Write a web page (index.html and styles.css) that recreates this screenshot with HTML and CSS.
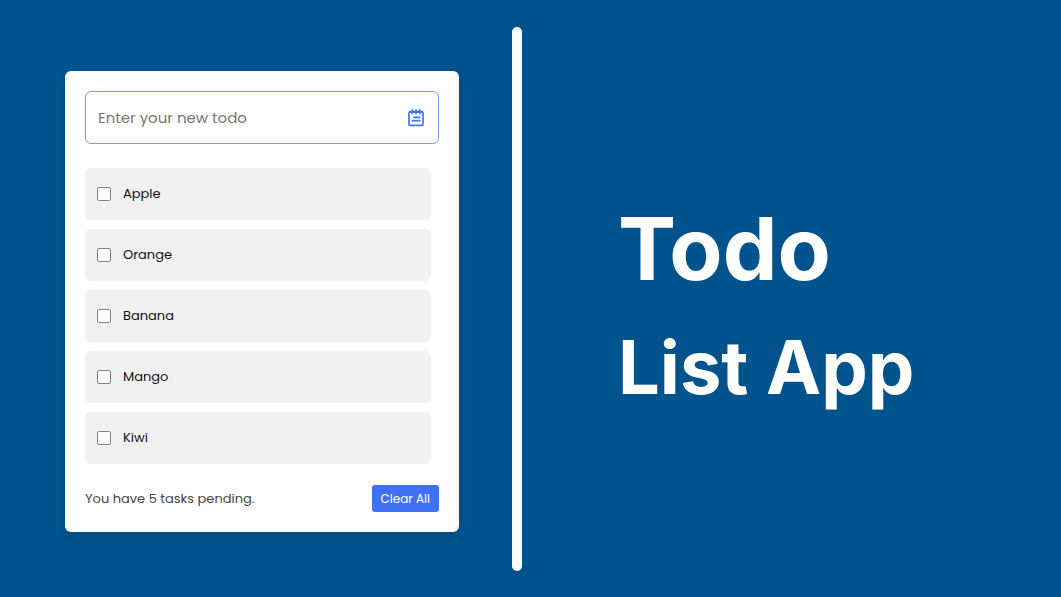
FILE: index.html
```html
<!DOCTYPE html>
<html lang="en">
<head>
  <meta charset="utf-8">
  <meta name="viewport" content="width=device-width, initial-scale=1">
  <title>Todo List App</title>
  <link rel="stylesheet" href="styles.css">
</head>
<body>
  <main class="stage">
    <section class="panel">
      <div class="card">
        <div class="field">
          <input class="field-input" type="text" placeholder="Enter your new todo" aria-label="Enter your new todo">
          <svg class="field-icon" viewBox="0 0 16 18" aria-hidden="true">
            <rect x="1" y="3" width="14" height="13.4" rx="1.2" fill="none" stroke="currentColor" stroke-width="1.7"/>
            <path d="M1 2.8h14" stroke="currentColor" stroke-width="2.2"/>
            <path d="M4.3 .8v4M8 .8v4M11.7 .8v4" stroke="currentColor" stroke-width="1.6" stroke-linecap="round"/>
            <path d="M6 8.3h5.6M4.4 11.6h7.4" stroke="currentColor" stroke-width="1.8" stroke-linecap="round"/>
          </svg>
        </div>
        <ul class="tasks">
          <li><label class="task"><input class="task-check" type="checkbox"><span>Apple</span></label></li>
          <li><label class="task"><input class="task-check" type="checkbox"><span>Orange</span></label></li>
          <li><label class="task"><input class="task-check" type="checkbox"><span>Banana</span></label></li>
          <li><label class="task"><input class="task-check" type="checkbox"><span>Mango</span></label></li>
          <li><label class="task"><input class="task-check" type="checkbox"><span>Kiwi</span></label></li>
        </ul>
        <div class="footer">
          <span class="pending">You have 5 tasks pending.</span>
          <button class="clear" type="button">Clear All</button>
        </div>
      </div>
    </section>
    <div class="divider"></div>
    <h1 class="title">
      <span class="title-main">Todo</span>
      <span class="title-sub">List App</span>
    </h1>
  </main>
</body>
</html>
```
FILE: styles.css
```css
* {
  box-sizing: border-box;
}

body {
  margin: 0;
  background: #00538d;
  font-family: Poppins, Inter, sans-serif;
}

.stage {
  display: grid;
  grid-template-columns: 512fr 10px 539fr;
  align-items: center;
  min-height: 100vh;
  padding: 27px 0 26px;
}

.panel {
  padding: 5px 53px 0 65px;
}

.card {
  padding: 20px;
  border-radius: 6px;
  background: #fff;
  box-shadow: 0 4px 8px rgba(0, 0, 0, 0.08);
}

.field {
  display: flex;
  align-items: center;
  height: 53px;
  padding: 0 14px 0 12px;
  border: 1px solid #7b99f8;
  border-radius: 6px;
}

.field-input {
  flex: 1;
  min-width: 0;
  padding: 0;
  border: 0;
  outline: 0;
  background: none;
  color: #222;
  font: 400 15px Poppins, Inter, sans-serif;
}

.field-input::placeholder {
  color: #757575;
  opacity: 1;
}

.field-icon {
  width: 16px;
  height: 18px;
  color: #4070f4;
}

.tasks {
  display: grid;
  gap: 9px;
  margin: 24px 8px 21px 0;
  padding: 0;
  list-style: none;
}

.task {
  display: flex;
  align-items: center;
  gap: 12px;
  height: 52px;
  padding: 0 12px;
  border-radius: 6px;
  background: #f1f1f1;
  color: #111;
  font-size: 13px;
}

.task-check {
  appearance: none;
  width: 14px;
  height: 14px;
  margin: 0;
  border: 1px solid #858585;
  border-radius: 2px;
  background: #fff;
}

.task-check:checked {
  background: #4070f4;
}

.footer {
  display: flex;
  align-items: center;
  justify-content: space-between;
}

.pending {
  color: #444;
  font-size: 13px;
}

.clear {
  height: 27px;
  padding: 0 9px;
  border: 0;
  border-radius: 3px;
  background: #4070f4;
  color: #fff;
  font: 400 12px Poppins, Inter, sans-serif;
}

.divider {
  align-self: stretch;
  border-radius: 5px;
  background: #fff;
}

.title {
  display: grid;
  gap: 12px;
  margin: 0;
  padding: 17px 20px 0 96px;
  color: #fff;
  font-family: Inter, sans-serif;
  font-weight: 700;
  white-space: nowrap;
}

.title-main {
  font-size: 87px;
  line-height: 106px;
}

.title-sub {
  font-size: 74px;
  line-height: 106px;
}
```
